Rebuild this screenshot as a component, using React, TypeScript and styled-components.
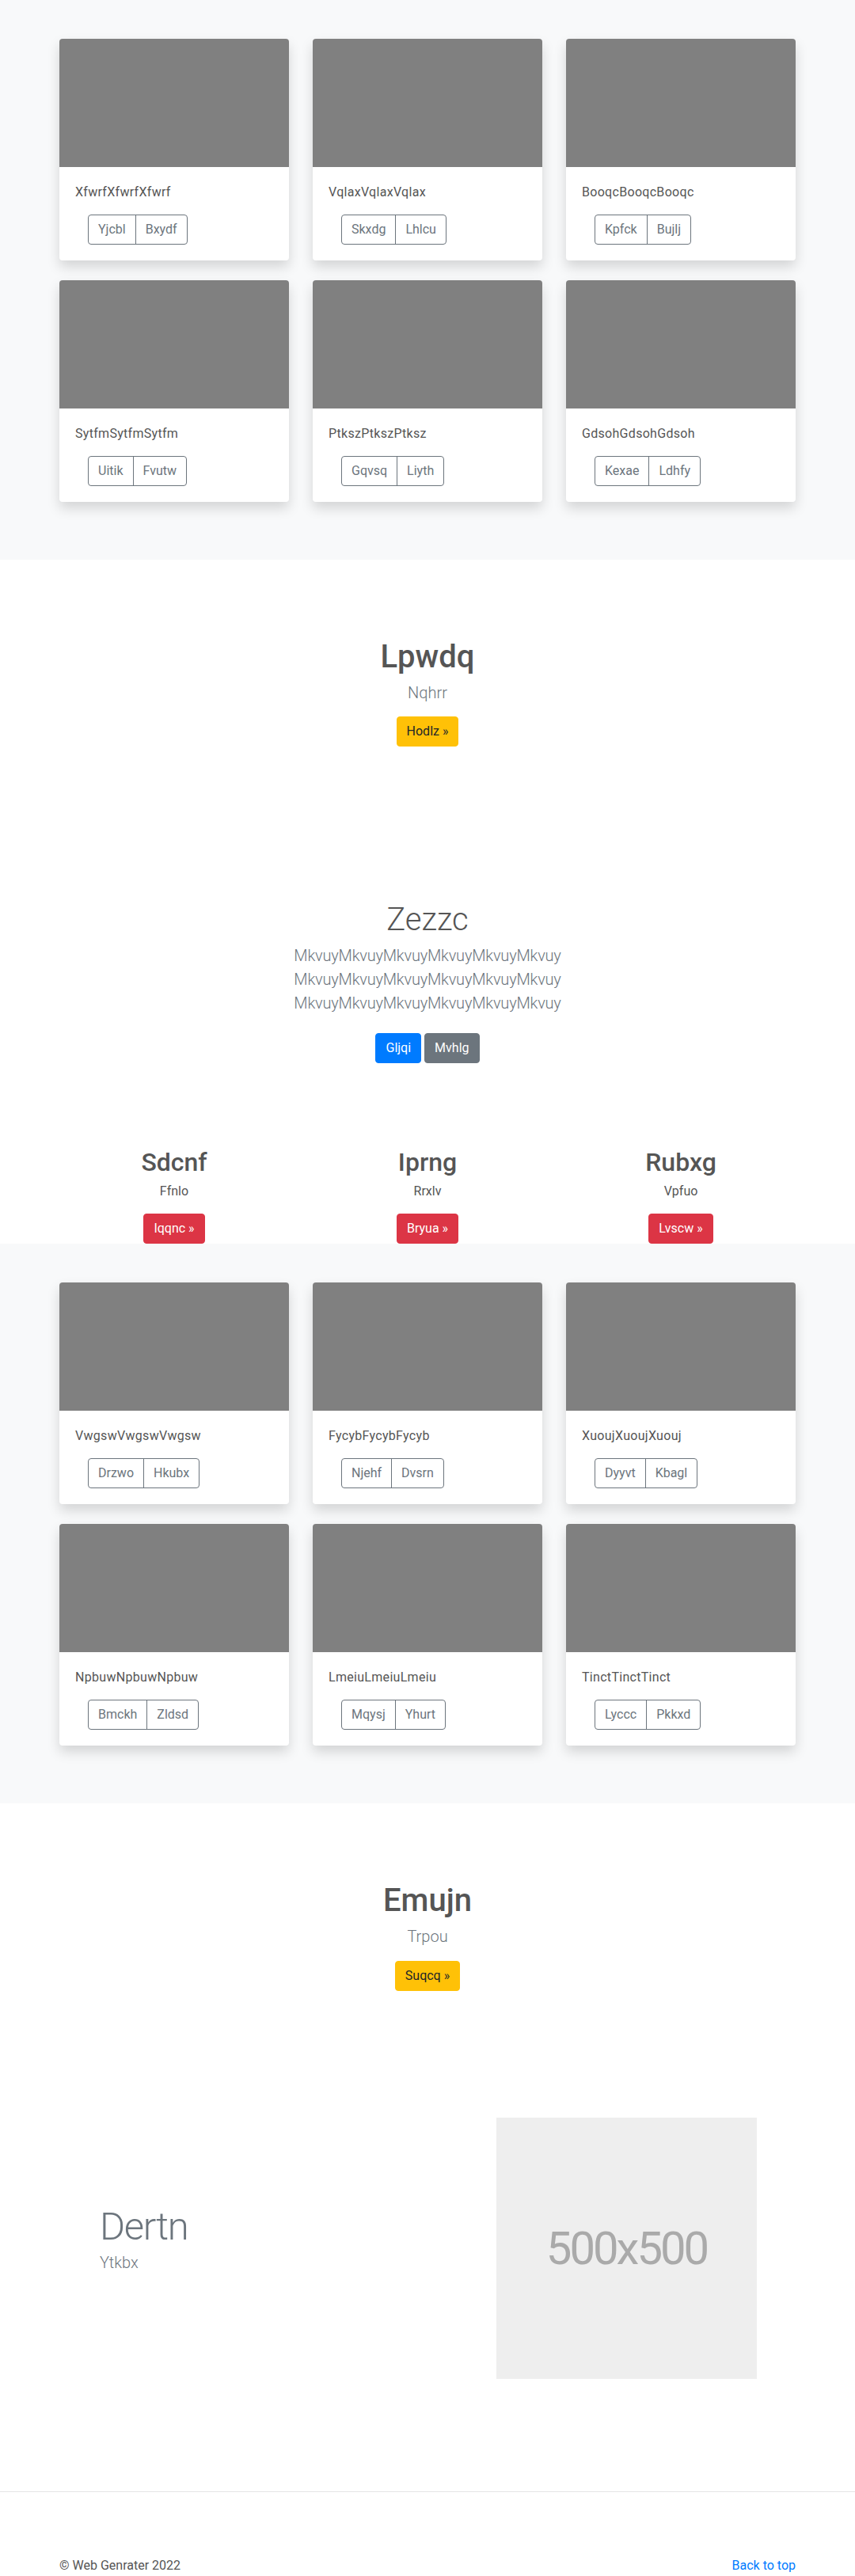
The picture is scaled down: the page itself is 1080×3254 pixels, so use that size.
import React from 'react'
import styled, { createGlobalStyle } from 'styled-components'

const GlobalStyle = createGlobalStyle`
  * {
    box-sizing: border-box;
  }
  body {
    margin: 0;
    background: #fff;
    color: #555;
    font-family: 'Segoe UI', Roboto, 'Noto Sans', sans-serif;
    font-size: 16px;
    line-height: 1.5;
  }
`

const Container = styled.div`
  width: 960px;
  margin: 0 auto;
  padding: 0 15px;
`

const Album = styled.section`
  background: #f8f9fa;
  padding: 49px 0 73px;
`

const CardGrid = styled.div`
  display: grid;
  grid-template-columns: repeat(3, 290px);
  column-gap: 30px;
  row-gap: 25px;
`

const Card = styled.div`
  background: #fff;
  border-radius: 4px;
  overflow: hidden;
  box-shadow: 0 8px 16px rgba(0, 0, 0, 0.15);
`

const Thumb = styled.div`
  height: 162px;
  background: #808080;
`

const CardBody = styled.div`
  padding: 20px;
`

const CardText = styled.p`
  margin: 0 0 16px;
  font-size: 16px;
  line-height: 24px;
  letter-spacing: 0.3px;
  color: #555;
`

const BtnGroup = styled.div`
  display: inline-flex;
  margin-left: 16px;
  border: 1px solid #6c757d;
  border-radius: 4px;
`

const GroupBtn = styled.button`
  font: inherit;
  font-size: 16px;
  line-height: 24px;
  padding: 6px 12px;
  background: transparent;
  border: 0;
  color: #6c757d;
  & + & {
    border-left: 1px solid #6c757d;
  }
`

const Hero = styled.section<{ top: number; bottom: number }>`
  padding: ${(p) => p.top}px 0 ${(p) => p.bottom}px;
  text-align: center;
`

const HeroTitle = styled.h1<{ light?: boolean }>`
  margin: 0 0 6px;
  font-size: 40px;
  line-height: 48px;
  font-weight: ${(p) => (p.light ? 300 : 500)};
  color: #555;
`

const Lead = styled.p<{ mb?: number; tight?: boolean }>`
  margin: 0 0 ${(p) => p.mb ?? 15}px;
  font-size: 20px;
  line-height: 30px;
  font-weight: 300;
  letter-spacing: ${(p) => (p.tight ? '-0.2px' : 'normal')};
  color: #6c757d;
`

const ButtonRow = styled.div`
  display: flex;
  justify-content: center;
  gap: 4px;
`

const palette = {
  warning: { bg: '#ffc107', fg: '#212529' },
  primary: { bg: '#007bff', fg: '#fff' },
  secondary: { bg: '#6c757d', fg: '#fff' },
  danger: { bg: '#dc3545', fg: '#fff' },
}

const Btn = styled.a<{ variant: keyof typeof palette }>`
  display: inline-block;
  padding: 6px 12px;
  font-size: 16px;
  line-height: 24px;
  border: 1px solid ${(p) => palette[p.variant].bg};
  border-radius: 4px;
  background: ${(p) => palette[p.variant].bg};
  color: ${(p) => palette[p.variant].fg};
  text-decoration: none;
`

const Columns = styled.div`
  display: grid;
  grid-template-columns: repeat(3, 1fr);
  margin: 0 -15px;
  text-align: center;
`

const ColTitle = styled.h2`
  margin: 0 0 6px;
  font-size: 32px;
  line-height: 38px;
  font-weight: 500;
  color: #555;
`

const ColText = styled.p`
  margin: 0 0 16px;
  font-size: 16px;
  line-height: 24px;
  color: #555;
`

const Featurette = styled.section`
  padding: 160px 0 142px;
`

const FeatureRow = styled.div`
  display: grid;
  grid-template-columns: 1fr 329px;
  align-items: center;
  padding: 0 49px 0 51px;
`

const FeatureText = styled.div`
  padding-bottom: 20px;
`

const FeatureHeading = styled.h2`
  margin: 0 0 5px;
  font-size: 49px;
  line-height: 50px;
  font-weight: 300;
  letter-spacing: -1.3px;
  color: #6c757d;
`

const Placeholder = styled.div`
  height: 330px;
  background: #eee;
  color: #aaa;
  display: flex;
  align-items: center;
  justify-content: center;
  font-size: 58px;
  letter-spacing: -3px;
`

const Divider = styled.hr`
  margin: 0;
  border: 0;
  border-top: 1px solid #e5e5e5;
`

const Footer = styled.footer`
  padding: 81px 0 0;
`

const FooterRow = styled(Container)`
  display: flex;
  justify-content: space-between;
  font-size: 16px;
  line-height: 24px;
`

const BackLink = styled.a`
  color: #007bff;
  text-decoration: none;
`

const albumOne = [
  ['XfwrfXfwrfXfwrf', 'Yjcbl', 'Bxydf'],
  ['VqlaxVqlaxVqlax', 'Skxdg', 'Lhlcu'],
  ['BooqcBooqcBooqc', 'Kpfck', 'Bujlj'],
  ['SytfmSytfmSytfm', 'Uitik', 'Fvutw'],
  ['PtkszPtkszPtksz', 'Gqvsq', 'Liyth'],
  ['GdsohGdsohGdsoh', 'Kexae', 'Ldhfy'],
]

const albumTwo = [
  ['VwgswVwgswVwgsw', 'Drzwo', 'Hkubx'],
  ['FycybFycybFycyb', 'Njehf', 'Dvsrn'],
  ['XuoujXuoujXuouj', 'Dyyvt', 'Kbagl'],
  ['NpbuwNpbuwNpbuw', 'Bmckh', 'Zldsd'],
  ['LmeiuLmeiuLmeiu', 'Mqysj', 'Yhurt'],
  ['TinctTinctTinct', 'Lyccc', 'Pkkxd'],
]

const AlbumSection = ({ items }: { items: string[][] }) => (
  <Album>
    <Container>
      <CardGrid>
        {items.map(([title, a, b]) => (
          <Card key={title}>
            <Thumb />
            <CardBody>
              <CardText>{title}</CardText>
              <BtnGroup>
                <GroupBtn>{a}</GroupBtn>
                <GroupBtn>{b}</GroupBtn>
              </BtnGroup>
            </CardBody>
          </Card>
        ))}
      </CardGrid>
    </Container>
  </Album>
)

const columns = [
  ['Sdcnf', 'Ffnlo', 'Iqqnc'],
  ['Iprng', 'Rrxlv', 'Bryua'],
  ['Rubxg', 'Vpfuo', 'Lvscw'],
]

const line = 'Mkvuy'.repeat(6)

export default function App() {
  return (
    <>
      <GlobalStyle />
      <AlbumSection items={albumOne} />

      <Hero top={99} bottom={195}>
        <HeroTitle>Lpwdq</HeroTitle>
        <Lead>Nqhrr</Lead>
        <Btn variant="warning">Hodlz &raquo;</Btn>
      </Hero>

      <Hero top={0} bottom={106}>
        <HeroTitle light>Zezzc</HeroTitle>
        <Lead mb={23} tight>
          {line}
          <br />
          {line}
          <br />
          {line}
        </Lead>
        <ButtonRow>
          <Btn variant="primary">Gljqi</Btn>
          <Btn variant="secondary">Mvhlg</Btn>
        </ButtonRow>
      </Hero>

      <Container>
        <Columns>
          {columns.map(([title, text, action]) => (
            <div key={title}>
              <ColTitle>{title}</ColTitle>
              <ColText>{text}</ColText>
              <Btn variant="danger">{action} &raquo;</Btn>
            </div>
          ))}
        </Columns>
      </Container>

      <AlbumSection items={albumTwo} />

      <Hero top={99} bottom={0}>
        <HeroTitle>Emujn</HeroTitle>
        <Lead mb={16}>Trpou</Lead>
        <Btn variant="warning">Suqcq &raquo;</Btn>
      </Hero>

      <Featurette>
        <Container>
          <FeatureRow>
            <FeatureText>
              <FeatureHeading>Dertn</FeatureHeading>
              <Lead mb={0}>Ytkbx</Lead>
            </FeatureText>
            <Placeholder>500x500</Placeholder>
          </FeatureRow>
        </Container>
      </Featurette>

      <Divider />

      <Footer>
        <FooterRow>
          <span>&copy; Web Genrater 2022</span>
          <BackLink href="#">Back to top</BackLink>
        </FooterRow>
      </Footer>
    </>
  )
}
